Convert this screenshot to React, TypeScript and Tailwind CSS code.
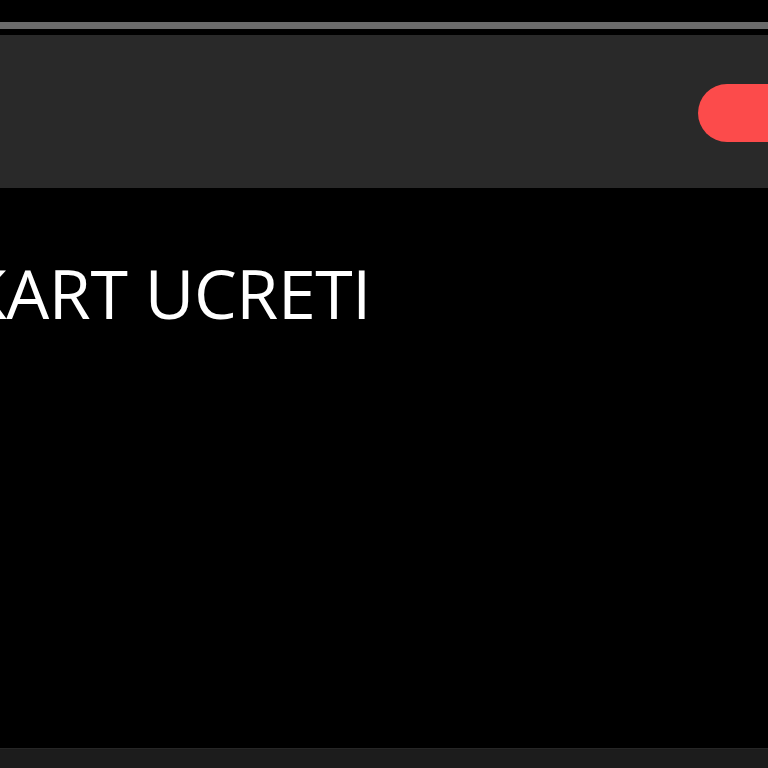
import React from 'react';

export default function App() {
  return (
    <div className="w-[768px] h-[768px] overflow-hidden bg-black flex flex-col" style={{ fontFamily: '"Open Sans", "Noto Sans", sans-serif' }}>
      {/* top bar */}
      <div className="h-[22px] shrink-0" />
      <div className="h-[7px] shrink-0 bg-[#6b6b6b]" />
      <div className="h-[6px] shrink-0" />

      {/* header */}
      <div className="h-[153px] shrink-0 bg-[#292929] flex items-center justify-end">
        <div className="w-[120px] h-[58px] -mr-[50px] mt-[2px] rounded-full bg-[#fc4b4b]" />
      </div>

      {/* content */}
      <div className="flex-1 pt-[64px]">
        <h1 className="-ml-[35px] text-[68px] leading-[1.2] font-normal text-white tracking-[-0.4px] whitespace-nowrap">
          KART UCRETI
        </h1>
      </div>

      {/* bottom strip */}
      <div className="h-[20px] shrink-0 bg-[#1c1c1c] border-t border-[#262626]" />
    </div>
  );
}
